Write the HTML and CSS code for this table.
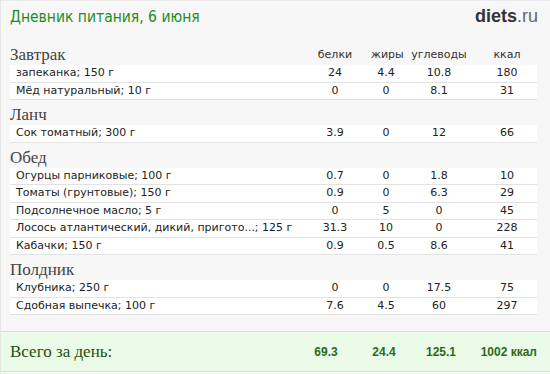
FILE: index.html
```html
<!DOCTYPE html>
<html lang="ru">
<head>
<meta charset="utf-8">
<link rel="stylesheet" href="styles.css">
</head>
<body>
<div class="page">
  <header class="top">
    <h1 class="title">Дневник питания, 6 июня</h1>
    <div class="logo"><b>diets</b>.ru</div>
  </header>

  <section class="meal">
    <div class="head">
      <h2 class="meal-name">Завтрак</h2>
      <span class="col">белки</span><span class="col">жиры</span><span class="col">углеводы</span><span class="col">ккал</span>
    </div>
    <div class="row"><span class="name">запеканка; 150 г</span><span class="col">24</span><span class="col">4.4</span><span class="col">10.8</span><span class="col">180</span></div>
    <div class="row"><span class="name">Мёд натуральный; 10 г</span><span class="col">0</span><span class="col">0</span><span class="col">8.1</span><span class="col">31</span></div>
  </section>

  <section class="meal">
    <div class="head"><h2 class="meal-name">Ланч</h2></div>
    <div class="row"><span class="name">Сок томатный; 300 г</span><span class="col">3.9</span><span class="col">0</span><span class="col">12</span><span class="col">66</span></div>
  </section>

  <section class="meal">
    <div class="head"><h2 class="meal-name">Обед</h2></div>
    <div class="row"><span class="name">Огурцы парниковые; 100 г</span><span class="col">0.7</span><span class="col">0</span><span class="col">1.8</span><span class="col">10</span></div>
    <div class="row"><span class="name">Томаты (грунтовые); 150 г</span><span class="col">0.9</span><span class="col">0</span><span class="col">6.3</span><span class="col">29</span></div>
    <div class="row"><span class="name">Подсолнечное масло; 5 г</span><span class="col">0</span><span class="col">5</span><span class="col">0</span><span class="col">45</span></div>
    <div class="row"><span class="name">Лосось атлантический, дикий, пригото...; 125 г</span><span class="col">31.3</span><span class="col">10</span><span class="col">0</span><span class="col">228</span></div>
    <div class="row"><span class="name">Кабачки; 150 г</span><span class="col">0.9</span><span class="col">0.5</span><span class="col">8.6</span><span class="col">41</span></div>
  </section>

  <section class="meal">
    <div class="head"><h2 class="meal-name">Полдник</h2></div>
    <div class="row"><span class="name">Клубника; 250 г</span><span class="col">0</span><span class="col">0</span><span class="col">17.5</span><span class="col">75</span></div>
    <div class="row"><span class="name">Сдобная выпечка; 100 г</span><span class="col">7.6</span><span class="col">4.5</span><span class="col">60</span><span class="col">297</span></div>
  </section>

  <footer class="total">
    <span class="total-label">Всего за день:</span>
    <span class="tcol">69.3</span><span class="tcol">24.4</span><span class="tcol">125.1</span><span class="tcol t4">1002 ккал</span>
  </footer>
</div>
</body>
</html>
```

FILE: styles.css
```css
* { box-sizing: border-box; }
html, body { margin: 0; padding: 0; }
body {
  background: #f7f7f7;
  width: 550px;
  height: 374px;
  overflow: hidden;
}
.page {
  width: 550px;
  height: 374px;
  border-left: 1px solid #e6e6e6;
  border-top: 1px solid #ececec;
  display: flex;
  flex-direction: column;
}
.top {
  display: flex;
  justify-content: space-between;
  align-items: baseline;
  padding: 5px 12px 0 9px;
  height: 45px;
  flex: none;
}
.title {
  margin: 0;
  font: normal 15.5px/20px "DejaVu Sans Condensed", "DejaVu Sans", sans-serif;
  color: #1e8c1e;
}
.logo {
  font: normal 18px/20px "Liberation Sans", Arial, sans-serif;
  color: #666;
}
.logo b { color: #333; }
.meal { padding: 0 13px 0 9px; flex: none; }
.head, .row {
  display: grid;
  grid-template-columns: 1fr 72px 30px 76px 60px;
}
.head { height: 25px; align-items: end; padding-bottom: 1px; }
.meal:first-of-type .head { height: 19px; }
.meal-name {
  margin: 0;
  font: normal 17px/18px "Liberation Serif", Georgia, serif;
  color: #444;
}
.head .col {
  font: 11px/14px "DejaVu Sans", Verdana, sans-serif;
  color: #333;
  text-align: center;
  padding-bottom: 2px;
}
.row {
  background: #fff;
  border-bottom: 1px solid #e2e2e2;
  height: 17.5px;
  align-items: center;
  font: 11px/16px "DejaVu Sans", Verdana, sans-serif;
  color: #222;
}
.name { padding-left: 6px; white-space: nowrap; }
.row .col { text-align: center; }
.total {
  margin-top: auto;
  margin-bottom: 2px;
  height: 41px;
  flex: none;
  background: #eafbe8;
  border-top: 1px solid #dcdcdc;
  border-bottom: 1px solid #dcdcdc;
  display: grid;
  grid-template-columns: 1fr 58px 58px 56px 68px;
  align-items: center;
  padding: 0 13px 0 9px;
}
.total-label {
  font: normal 17px/18px "Liberation Serif", Georgia, serif;
  color: #1d4f10;
}
.tcol {
  font: bold 12px/16px "Liberation Sans", Arial, sans-serif;
  color: #2a6a1a;
  text-align: center;
}
.t4 { text-align: right; }
```
